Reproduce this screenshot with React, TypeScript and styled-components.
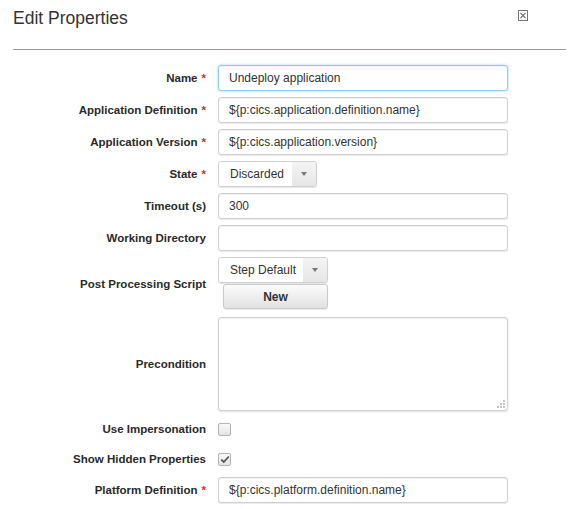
import React from "react";
import styled, { createGlobalStyle } from "styled-components";

const Global = createGlobalStyle`
  html, body { margin: 0; padding: 0; background: #fff; }
  body { font-family: "Liberation Sans", Arial, sans-serif; color: #333; }
  * { box-sizing: border-box; }
`;

const Dialog = styled.div`
  width: 573px;
  height: 509px;
  overflow: hidden;
  background: #fff;
`;

const Header = styled.div`
  display: flex;
  justify-content: space-between;
  align-items: flex-start;
  height: 50px;
  margin: 0 7px 0 13px;
  border-bottom: 1px solid #9a9a9a;
`;

const Title = styled.h3`
  margin: 0;
  padding-top: 8px;
  font-size: 17.5px;
  line-height: 20px;
  font-weight: normal;
  color: #333;
`;

const Close = styled.button`
  margin: 9px 38px 0 0;
  padding: 0;
  border: none;
  background: none;
  width: 10px;
  height: 11px;
  display: block;
  cursor: pointer;
`;

const Form = styled.div`
  display: flex;
  flex-direction: column;
  gap: 6px;
  padding-top: 15px;
`;

const Row = styled.div<{ $h?: number }>`
  display: grid;
  grid-template-columns: 206px 290px;
  column-gap: 12px;
  align-items: center;
  min-height: ${(p) => p.$h ?? 26}px;
`;

const Label = styled.label`
  text-align: right;
  font-size: 11.5px;
  font-weight: bold;
  color: #2a2a2a;
  white-space: nowrap;
`;

const Req = styled.span`
  color: #e8202a;
  margin-left: 4px;
`;

const Input = styled.input<{ $focus?: boolean }>`
  width: 290px;
  height: 26px;
  padding: 0 10px;
  font-family: "Liberation Sans", Arial, sans-serif;
  font-size: 12px;
  color: #333;
  border: 1px solid ${(p) => (p.$focus ? "#8fcdf2" : "#cfcfcf")};
  border-radius: 3px;
  background: #fff;
  box-shadow: ${(p) =>
    p.$focus
      ? "0 0 3px rgba(82,168,236,0.55), inset 0 1px 1px rgba(0,0,0,0.05)"
      : "inset 0 1px 1px rgba(0,0,0,0.06), 0 1px 1px rgba(0,0,0,0.08)"};
  outline: none;
`;

const Stack = styled.div`
  display: flex;
  flex-direction: column;
  align-items: flex-start;
  gap: 1px;
  padding-bottom: 2px;
`;

const Select = styled.div<{ $w: number }>`
  display: flex;
  width: ${(p) => p.$w}px;
  height: 26px;
  border: 1px solid #d0d0d0;
  border-radius: 3px;
  overflow: hidden;
  box-shadow: 0 1px 1px rgba(0, 0, 0, 0.1);
  font-size: 12px;
  color: #333;
`;

const SelectValue = styled.div`
  flex: 1;
  display: flex;
  align-items: center;
  padding-left: 11px;
  background: #fff;
`;

const Caret = styled.div`
  width: 24px;
  display: flex;
  align-items: center;
  justify-content: center;
  background: linear-gradient(#f4f4f4, #e6e6e6);
  &::after {
    content: "";
    border-left: 3.5px solid transparent;
    border-right: 3.5px solid transparent;
    border-top: 4px solid #777;
  }
`;

const Button = styled.button`
  margin-left: 5px;
  width: 105px;
  height: 25px;
  font-family: "Liberation Sans", Arial, sans-serif;
  font-size: 12px;
  font-weight: bold;
  color: #333;
  border: 1px solid #c9c9c9;
  border-radius: 3px;
  background: linear-gradient(#fbfbfb, #e2e2e2);
  box-shadow: 0 1px 1px rgba(0, 0, 0, 0.08);
  padding: 0;
`;

const AreaWrap = styled.div`
  position: relative;
  width: 290px;
  height: 94px;
`;

const TextArea = styled.textarea`
  width: 290px;
  height: 94px;
  resize: none;
  border: 1px solid #d0d0d0;
  border-radius: 3px;
  box-shadow: inset 0 1px 1px rgba(0,0,0,0.06), 0 1px 2px rgba(0,0,0,0.12);
  outline: none;
  display: block;
`;

const Grip = styled.svg`
  position: absolute;
  right: 3px;
  bottom: 3px;
`;

const Check = styled.div`
  width: 13px;
  height: 13px;
  border: 1px solid #b5b5b5;
  border-radius: 2px;
  background: linear-gradient(#fafafa, #e4e4e4);
  display: flex;
  align-items: center;
  justify-content: center;
`;

const fields = [
  { label: "Name", req: true, value: "Undeploy application", focus: true },
  { label: "Application Definition", req: true, value: "${p:cics.application.definition.name}" },
  { label: "Application Version", req: true, value: "${p:cics.application.version}" },
];

export default function App() {
  return (
    <Dialog>
      <Global />
      <Header>
        <Title>Edit Properties</Title>
        <Close aria-label="close">
          <svg width="10" height="11" viewBox="0 0 10 11">
            <rect x="0.5" y="0.5" width="9" height="10" fill="none" stroke="#777" />
            <path d="M2.5 2.8 L7.5 8.2 M7.5 2.8 L2.5 8.2" stroke="#666" strokeWidth="1.1" />
          </svg>
        </Close>
      </Header>
      <Form>
        {fields.map((f) => (
          <Row key={f.label}>
            <Label>
              {f.label}
              {f.req && <Req>*</Req>}
            </Label>
            <Input $focus={f.focus} defaultValue={f.value} />
          </Row>
        ))}
        <Row>
          <Label>
            State<Req>*</Req>
          </Label>
          <Select $w={99}>
            <SelectValue>Discarded</SelectValue>
            <Caret />
          </Select>
        </Row>
        <Row>
          <Label>Timeout (s)</Label>
          <Input defaultValue="300" />
        </Row>
        <Row>
          <Label>Working Directory</Label>
          <Input defaultValue="" />
        </Row>
        <Row>
          <Label>Post Processing Script</Label>
          <Stack>
            <Select $w={110}>
              <SelectValue>Step Default</SelectValue>
              <Caret />
            </Select>
            <Button>New</Button>
          </Stack>
        </Row>
        <Row>
          <Label>Precondition</Label>
          <AreaWrap>
            <TextArea />
            <Grip width="8" height="8" viewBox="0 0 8 8">
              {[
                [6, 0], [6, 3], [3, 3], [6, 6], [3, 6], [0, 6],
              ].map(([x, y], i) => (
                <rect key={i} x={x} y={y} width="2" height="2" fill="#c4c4c4" />
              ))}
            </Grip>
          </AreaWrap>
        </Row>
        <Row $h={24}>
          <Label>Use Impersonation</Label>
          <Check />
        </Row>
        <Row $h={24}>
          <Label>Show Hidden Properties</Label>
          <Check>
            <svg width="10" height="9" viewBox="0 0 10 9">
              <path d="M1.3 4.6 L3.8 7 L8.8 1.5" fill="none" stroke="#555" strokeWidth="1.8" />
            </svg>
          </Check>
        </Row>
        <Row>
          <Label>
            Platform Definition<Req>*</Req>
          </Label>
          <Input defaultValue="${p:cics.platform.definition.name}" />
        </Row>
      </Form>
    </Dialog>
  );
}
